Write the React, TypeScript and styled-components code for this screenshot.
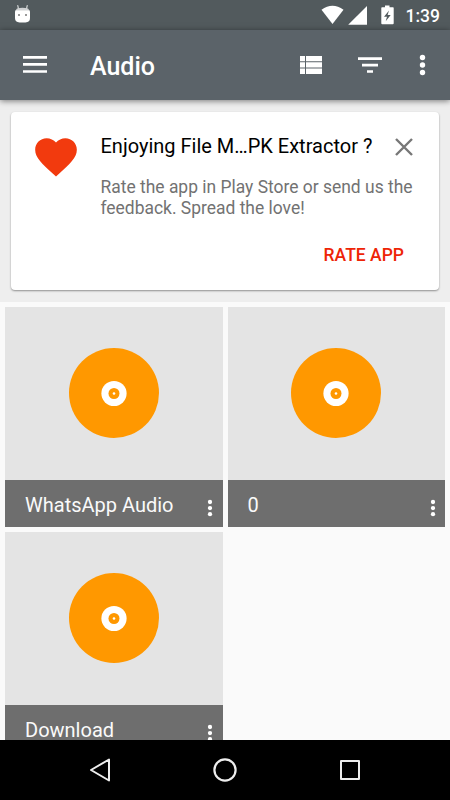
import React from "react";
import styled, { createGlobalStyle } from "styled-components";

const GlobalStyle = createGlobalStyle`
  *, *::before, *::after { box-sizing: border-box; }
  body { margin: 0; background: #fafafa; font-family: Roboto, sans-serif; }
  svg { display: block; flex: none; }
  h1, h2, p { margin: 0; }
  button { border: 0; padding: 0; background: none; font-family: inherit; display: block; }
`;

const Screen = styled.div`
  width: 450px;
  height: 800px;
  display: flex;
  flex-direction: column;
  overflow: hidden;
`;

const StatusBar = styled.div`
  flex: none;
  height: 30px;
  display: flex;
  justify-content: space-between;
  padding: 0 10px 0 14px;
  background: #525a5d;
`;

const StatusGroup = styled.div`
  display: flex;
`;

const Clock = styled.span`
  margin-left: 11px;
  font-size: 17.5px;
  font-weight: 500;
  line-height: 32px;
  color: #fff;
`;

const Toolbar = styled.header`
  flex: none;
  height: 70px;
  display: flex;
  align-items: center;
  padding: 0 20px;
  background: #5b6369;
  box-shadow: 0 1px 6px rgba(0, 0, 0, 0.5);
  z-index: 1;
`;

const Title = styled.h1`
  flex: 1;
  margin-left: 40px;
  padding-top: 3px;
  font-size: 25px;
  font-weight: 500;
  line-height: 30px;
  color: #fff;
`;

const Actions = styled.div`
  display: flex;
  gap: 29px;
`;

const Content = styled.main`
  flex: 1;
  min-height: 0;
  overflow: hidden;
`;

const Banner = styled.section`
  height: 202px;
  padding: 12px 11px;
  background: #eee;
`;

const Card = styled.div`
  height: 178px;
  display: flex;
  padding: 20px 25px 0 19.5px;
  border-radius: 4px;
  background: #fff;
  box-shadow: 0 1px 2px rgba(0, 0, 0, 0.4);
`;

const CardBody = styled.div`
  flex: 1;
  margin-left: 20px;
`;

const CardHeading = styled.div`
  display: flex;
  align-items: flex-start;
  justify-content: space-between;
  height: 30px;
`;

const CardTitle = styled.h2`
  font-size: 20px;
  font-weight: 400;
  line-height: 28px;
  white-space: nowrap;
  color: #000;
`;

const CardText = styled.p`
  margin-top: 15px;
  font-size: 17.45px;
  line-height: 20.6px;
  white-space: nowrap;
  color: #727272;
`;

const RateButton = styled.button`
  margin: 26px 10px 0 auto;
  font-size: 17.5px;
  font-weight: 500;
  line-height: 22px;
  color: #ee2406;
`;

const Grid = styled.section`
  display: grid;
  grid-template-columns: repeat(2, 217.5px);
  grid-auto-rows: 220px;
  gap: 5px;
  padding: 5px;
`;

const Tile = styled.article`
  display: flex;
  flex-direction: column;
  background: #e4e4e4;
`;

const Artwork = styled.div`
  height: 173px;
  display: flex;
  align-items: center;
  justify-content: center;
  padding-bottom: 1px;
`;

const TileLabel = styled.div`
  height: 47px;
  display: flex;
  align-items: flex-start;
  justify-content: space-between;
  padding: 0 7.5px 0 20px;
  background: #6e6e6e;
`;

const TileName = styled.span`
  font-size: 20px;
  line-height: 50px;
  color: #fafafa;
`;

const TileMenu = styled.button`
  margin-top: 18px;
`;

const NavBar = styled.nav`
  flex: none;
  height: 60px;
  display: flex;
  align-items: center;
  justify-content: center;
  gap: 95px;
  background: #000;
`;

const folders = ["WhatsApp Audio", "0", "Download"];

function Disc() {
  return (
    <svg width="90" height="90" viewBox="0 0 90 90">
      <circle cx="45" cy="45" r="45" fill="#ff9800" />
      <circle cx="45" cy="45.5" r="12.6" fill="#fff" />
      <circle cx="45" cy="45.5" r="5.5" fill="#ff9800" />
      <circle cx="45" cy="45.5" r="1.3" fill="#fff" />
    </svg>
  );
}

export default function App() {
  return (
    <>
      <GlobalStyle />
      <Screen>
        <StatusBar>
          <svg width="17" height="30" viewBox="0 0 17 30">
            <path d="M4.4 8.5 3.8 5.6M12.6 8.5l.6-2.9" stroke="#d5d8d9" strokeWidth="1.2" strokeLinecap="round" />
            <path d="M3 8.4Q8.5 7 14 8.4L15.8 11H1.2z" fill="#d0d2d3" />
            <path d="M1 11.5q0-1 1-1h13q1 0 1 1V18q0 4.4-4.5 4.4h-6Q1 22.4 1 18z" fill="#fff" />
            <path d="M4 14h2v2H4zM11 14h2v2h-2z" fill="#999" />
          </svg>
          <StatusGroup>
            <svg width="74" height="30" viewBox="321 0 74 30" fill="#fff">
              <path d="M321.5 9.7Q332.5 2 343.5 9.7L332.5 24z" />
              <path d="M367 6v18.8h-18.8z" />
              <path d="M385 5.5h4.5v1.8H393q.7 0 .7.8v15.2q0 .9-.9.9h-10.6q-.9 0-.9-.9V8.1q0-.8.8-.8h2.9z" />
              <path d="m389 10.500-5 6.200h3l-1.300 4.600 5-6.400h-3.100z" fill="#525a5d" />
            </svg>
            <Clock>1:39</Clock>
          </StatusGroup>
        </StatusBar>
        <Toolbar>
          <svg width="30" height="30" viewBox="0 0 30 30" fill="#fff">
            <path d="M3 6h24v2.7H3zM3 13.1h24v2.7H3zM3 20.2h24v2.6H3z" />
          </svg>
          <Title>Audio</Title>
          <Actions>
            <svg width="30" height="30" viewBox="0 0 30 30" fill="#fff">
              <path d="M4 6h5v5.200H4zM10 6h16v5.200H10zM4 12.200h5v5.300H4zM10 12.200h16v5.300H10zM4 18.500h5V24H4zM10 18.500h16V24H10z" />
            </svg>
            <svg width="30" height="30" viewBox="0 0 30 30" fill="#fff">
              <path d="M3 7.2h24v2.7H3zM7 13.7h16v2.7H7zM12 20.2h6v2.5h-6z" />
            </svg>
            <svg width="16" height="30" viewBox="0 0 16 30" fill="#fff">
              <circle cx="8.5" cy="7.5" r="2.7" />
              <circle cx="8.5" cy="15" r="2.7" />
              <circle cx="8.5" cy="22.5" r="2.7" />
            </svg>
          </Actions>
        </Toolbar>
        <Content>
          <Banner>
            <Card>
              <svg width="50" height="50" viewBox="0 0 24 24">
                <path
                  fill="#f23a0e"
                  d="M12 21.35l-1.45-1.32C5.4 15.36 2 12.28 2 8.5 2 5.42 4.42 3 7.5 3c1.74 0 3.41.81 4.5 2.09C13.09 3.81 14.76 3 16.5 3 19.58 3 22 5.42 22 8.5c0 3.78-3.4 6.86-8.55 11.54L12 21.35z"
                />
              </svg>
              <CardBody>
                <CardHeading>
                  <CardTitle>Enjoying File M…PK Extractor ?</CardTitle>
                  <svg width="20" height="30" viewBox="0 0 20 30">
                    <path d="m2 7 16 16m0-16-16 16" stroke="#777" strokeWidth="2.4" />
                  </svg>
                </CardHeading>
                <CardText>
                  Rate the app in Play Store or send us the
                  <br />
                  feedback. Spread the love!
                </CardText>
                <RateButton>RATE APP</RateButton>
              </CardBody>
            </Card>
          </Banner>
          <Grid>
            {folders.map((name) => (
              <Tile key={name}>
                <Artwork>
                  <Disc />
                </Artwork>
                <TileLabel>
                  <TileName>{name}</TileName>
                  <TileMenu aria-label={`${name} options`}>
                    <svg width="10" height="20" viewBox="0 0 10 20" fill="#fff">
                      <circle cx="5" cy="4" r="2.15" />
                      <circle cx="5" cy="10.1" r="2.15" />
                      <circle cx="5" cy="16.2" r="2.15" />
                    </svg>
                  </TileMenu>
                </TileLabel>
              </Tile>
            ))}
          </Grid>
        </Content>
        <NavBar>
          <svg width="30" height="30" viewBox="0 0 30 30" fill="none" stroke="#eee" strokeWidth="2" strokeLinejoin="round">
            <path d="M24 4.5v21L6 15z" />
          </svg>
          <svg width="30" height="30" viewBox="0 0 30 30" fill="none" stroke="#eee" strokeWidth="2.2">
            <circle cx="15" cy="15" r="10.6" />
          </svg>
          <svg width="30" height="30" viewBox="0 0 30 30" fill="none" stroke="#eee" strokeWidth="2" strokeLinejoin="round">
            <path d="M6 6h18v18H6z" />
          </svg>
        </NavBar>
      </Screen>
    </>
  );
}
